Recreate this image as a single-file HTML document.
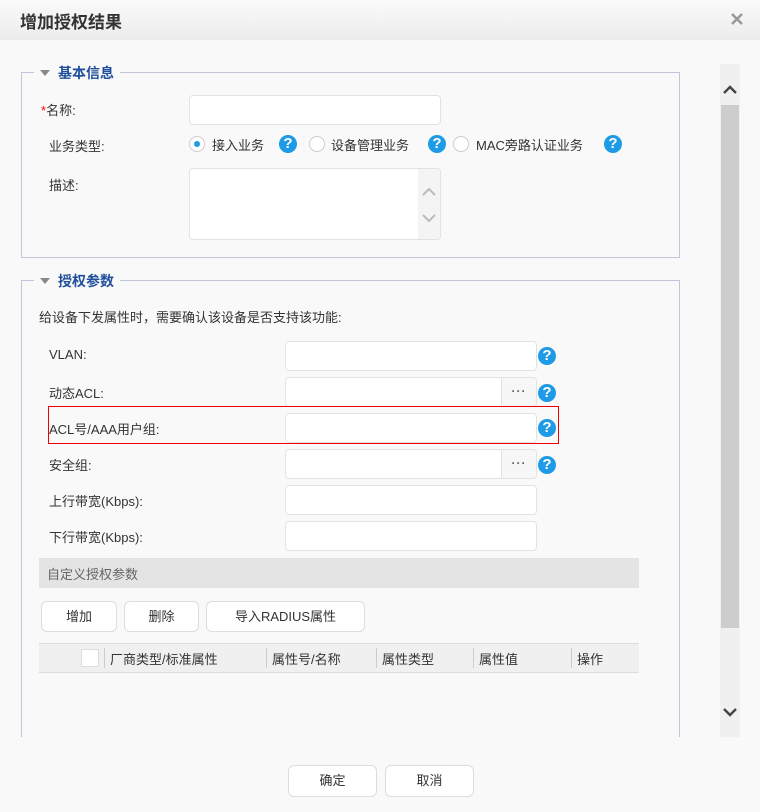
<!DOCTYPE html>
<html><head><meta charset="utf-8"><style>
*{box-sizing:border-box;margin:0;padding:0}
body{width:760px;height:812px;background:#f9f9f9;font-family:"Liberation Sans","Noto Sans CJK SC",sans-serif;font-size:13px;color:#333;position:relative;overflow:hidden}
.a{position:absolute}
.title{left:0;top:0;width:760px;height:40px;background:linear-gradient(#fafafa,#ececec)}
.inp{position:absolute;background:#fff;border:1px solid #e2e2e2;border-radius:4px}
.fs{position:absolute;border:1px solid #c2c5dc}
.leg{position:absolute;background:#f9f9f9;padding:0 6px;color:#1f4e9a;font-weight:bold;font-size:14px}
.tri{display:inline-block;width:0;height:0;border-left:5px solid transparent;border-right:5px solid transparent;border-top:6px solid #888;margin-right:8px;vertical-align:2px}
.help{position:absolute;width:18px;height:18px;border-radius:50%;background:#1e9be6;color:#fff;font-weight:bold;font-size:15px;text-align:center;line-height:18px;font-family:"Liberation Sans",sans-serif}
.radio{position:absolute;width:16px;height:16px;border-radius:50%;border:1px solid #ccc;background:#fff}
.lbl{position:absolute;font-size:13px;color:#333}
.btn{position:absolute;background:#fff;border:1px solid #ddd;border-radius:6px;text-align:center;font-size:13px;color:#333}
.dots{position:absolute;width:35px;border-left:1px solid #e2e2e2;background:#f7f7f7;border-radius:0 4px 4px 0;text-align:center;color:#666;font-size:12px;letter-spacing:1px;font-weight:bold}
</style></head><body>
<div class="a title"></div>
<div class="a" style="left:20px;top:8px;font-size:17px;font-weight:bold;color:#333">增加授权结果</div>
<svg class="a" style="left:730px;top:12px" width="14" height="14"><path d="M2 2L12 12M12 2L2 12" stroke="#999" stroke-width="2.6"/></svg>

<div class="fs" style="left:21px;top:72px;width:659px;height:186px"></div>
<div class="leg" style="left:34px;top:63px"><span class="tri"></span>基本信息</div>
<div class="lbl" style="left:41px;top:100px"><span style="color:red">*</span>名称:</div>
<div class="inp" style="left:189px;top:95px;width:252px;height:30px"></div>
<div class="lbl" style="left:49px;top:136px">业务类型:</div>
<div class="radio" style="left:189px;top:136px"><div style="position:absolute;left:4px;top:4px;width:6px;height:6px;border-radius:50%;background:#1e9be6"></div></div>
<div class="lbl" style="left:212px;top:135px">接入业务</div>
<div class="help" style="left:279px;top:135px">?</div>
<div class="radio" style="left:309px;top:136px"></div>
<div class="lbl" style="left:331px;top:135px">设备管理业务</div>
<div class="help" style="left:428px;top:135px">?</div>
<div class="radio" style="left:453px;top:136px"></div>
<div class="lbl" style="left:476px;top:135px">MAC旁路认证业务</div>
<div class="help" style="left:604px;top:135px">?</div>
<div class="lbl" style="left:49px;top:175px">描述:</div>
<div class="inp" style="left:189px;top:168px;width:252px;height:72px"><div style="position:absolute;right:0;top:0;width:22px;height:70px;background:#f4f4f4;border-radius:0 4px 4px 0"><svg width="22" height="70"><path d="M5 26L11 20L17 26M5 46L11 52L17 46" fill="none" stroke="#bbb" stroke-width="2"/></svg></div></div>

<div class="fs" style="left:21px;top:280px;width:659px;height:470px;border-bottom:none"></div>
<div class="leg" style="left:34px;top:271px"><span class="tri"></span>授权参数</div>
<div class="lbl" style="left:39px;top:307px">给设备下发属性时，需要确认该设备是否支持该功能:</div>

<div class="lbl" style="left:49px;top:347px">VLAN:</div>
<div class="inp" style="left:285px;top:341px;width:252px;height:30px"></div>
<div class="help" style="left:538px;top:347px">?</div>
<div class="lbl" style="left:49px;top:383px">动态ACL:</div>
<div class="inp" style="left:285px;top:377px;width:252px;height:30px"><div class="dots" style="right:0;top:0;height:28px;line-height:26px">···</div></div>
<div class="help" style="left:538px;top:384px">?</div>
<div class="lbl" style="left:49px;top:419px">ACL号/AAA用户组:</div>
<div class="inp" style="left:285px;top:413px;width:252px;height:30px"></div>
<div class="help" style="left:538px;top:419px">?</div>
<div class="a" style="left:48px;top:406px;width:511px;height:38px;border:1px solid #e00"></div>
<div class="lbl" style="left:49px;top:455px">安全组:</div>
<div class="inp" style="left:285px;top:449px;width:252px;height:30px"><div class="dots" style="right:0;top:0;height:28px;line-height:26px">···</div></div>
<div class="help" style="left:538px;top:456px">?</div>
<div class="lbl" style="left:49px;top:491px">上行带宽(Kbps):</div>
<div class="inp" style="left:285px;top:485px;width:252px;height:30px"></div>
<div class="lbl" style="left:49px;top:527px">下行带宽(Kbps):</div>
<div class="inp" style="left:285px;top:521px;width:252px;height:30px"></div>

<div class="a" style="left:39px;top:558px;width:600px;height:30px;background:#e4e4e4;color:#666;padding:6px 8px">自定义授权参数</div>
<div class="btn" style="left:41px;top:601px;width:76px;height:31px;line-height:29px">增加</div>
<div class="btn" style="left:124px;top:601px;width:75px;height:31px;line-height:29px">删除</div>
<div class="btn" style="left:206px;top:601px;width:159px;height:31px;line-height:29px">导入RADIUS属性</div>

<div class="a" style="left:39px;top:643px;width:600px;height:30px;background:#f0f0f0;border-top:1px solid #ddd;border-bottom:1px solid #ddd"></div>
<div class="a" style="left:81px;top:649px;width:18px;height:18px;background:#fff;border:1px solid #ddd"></div>
<div class="a" style="left:104px;top:648px;height:20px;border-left:1px solid #ccc"></div>
<div class="lbl" style="left:110px;top:649px">厂商类型/标准属性</div>
<div class="a" style="left:266px;top:648px;height:20px;border-left:1px solid #ccc"></div>
<div class="lbl" style="left:272px;top:649px">属性号/名称</div>
<div class="a" style="left:376px;top:648px;height:20px;border-left:1px solid #ccc"></div>
<div class="lbl" style="left:382px;top:649px">属性类型</div>
<div class="a" style="left:473px;top:648px;height:20px;border-left:1px solid #ccc"></div>
<div class="lbl" style="left:479px;top:649px">属性值</div>
<div class="a" style="left:571px;top:648px;height:20px;border-left:1px solid #ccc"></div>
<div class="lbl" style="left:577px;top:649px">操作</div>

<div class="a" style="left:0;top:737px;width:720px;height:20px;background:#f9f9f9"></div>

<div class="a" style="left:720px;top:64px;width:20px;height:673px;background:#f0f0f0"></div>
<div class="a" style="left:721px;top:105px;width:18px;height:523px;background:#cdcdcd"></div>
<svg class="a" style="left:720px;top:80px" width="20" height="20"><path d="M4 13L10 7L16 13" fill="none" stroke="#444" stroke-width="2.4"/></svg>
<svg class="a" style="left:720px;top:702px" width="20" height="20"><path d="M4 7L10 13L16 7" fill="none" stroke="#444" stroke-width="2.4"/></svg>

<div class="btn" style="left:288px;top:765px;width:89px;height:32px;line-height:30px">确定</div>
<div class="btn" style="left:385px;top:765px;width:89px;height:32px;line-height:30px">取消</div>
</body></html>
